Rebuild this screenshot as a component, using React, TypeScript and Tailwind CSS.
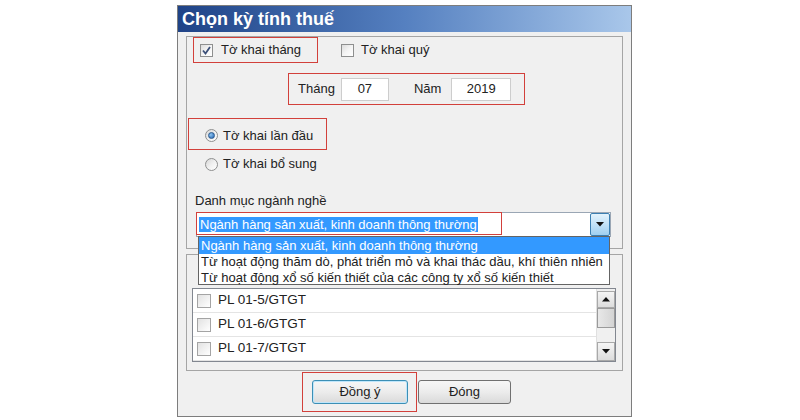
import React from "react";

function Check({ checked }: { checked?: boolean }) {
  return (
    <div className="w-[13px] h-[13px] shrink-0 border border-[#8e8f8f] bg-gradient-to-br from-[#dcdcdc] via-[#f4f4f4] to-white flex items-center justify-center">
      {checked && (
        <svg width="11" height="11" viewBox="0 0 11 11">
          <path d="M2 5.5 L4.5 8.5 L9 2" fill="none" stroke="#3b4f78" strokeWidth="1.8" />
        </svg>
      )}
    </div>
  );
}

function Radio({ checked }: { checked?: boolean }) {
  return (
    <div className="w-[13px] h-[13px] shrink-0 rounded-full border border-[#8e8f8f] bg-gradient-to-br from-[#d6d6d6] via-[#f0f0f0] to-white flex items-center justify-center">
      {checked && (
        <div className="w-[7px] h-[7px] rounded-full bg-[radial-gradient(circle_at_35%_35%,#8fc6f2,#1f5fae)] border border-[#2b5a8f]" />
      )}
    </div>
  );
}

function ListCheck() {
  return <div className="w-[14px] h-[14px] shrink-0 border border-[#a4a4a4] bg-gradient-to-br from-[#e2e2e2] to-white" />;
}

export default function App() {
  return (
    <div className="w-[800px] h-[420px] bg-white overflow-hidden font-['Liberation_Sans',Arial,sans-serif] text-[13px] text-[#222]">
      <div className="ml-[177px] mt-[5px] w-[455px] h-[412px] border border-[#7d7d7d] bg-[#f0f0f0] flex flex-col">
        <div className="h-[26px] shrink-0 bg-gradient-to-r from-[#1f4387] via-[#5580c0] to-[#a9c7ea] flex items-center pl-[4px] text-white font-bold text-[18px]">
          Chọn kỳ tính thuế
        </div>
        <div className="pl-[8px] flex flex-col">
          {/* Group 1 */}
          <div className="mt-[4px] w-[437px] h-[213px] border border-[#a5a5a5] flex flex-col">
            <div className="flex items-center h-[26px]">
              <div className="ml-[6px] w-[125px] h-[26px] border border-[#d2403b] flex items-center pl-[6px]">
                <Check checked />
                <span className="ml-[8px]">Tờ khai tháng</span>
              </div>
              <div className="ml-[23px] flex items-center">
                <Check />
                <span className="ml-[7px]">Tờ khai quý</span>
              </div>
            </div>
            <div className="mt-[10px] ml-[101px] w-[237px] h-[32px] border border-[#d2403b] flex items-center pl-[9px]">
              <span>Tháng</span>
              <div className="ml-[6px] w-[48px] h-[23px] bg-white border border-[#cdcdcd] flex items-center justify-center">07</div>
              <span className="ml-[25px]">Năm</span>
              <div className="ml-[10px] w-[60px] h-[23px] bg-white border border-[#cdcdcd] flex items-center justify-center">2019</div>
            </div>
            <div className="mt-[13px] ml-[1px] w-[139px] h-[32px] border border-[#d2403b] flex items-center pl-[16px] pt-[3px]">
              <Radio checked />
              <span className="ml-[5px]">Tờ khai lần đầu</span>
            </div>
            <div className="mt-[6px] ml-[18px] h-[16px] flex items-center">
              <Radio />
              <span className="ml-[5px]">Tờ khai bổ sung</span>
            </div>
            <div className="mt-[21px] ml-[8px] h-[16px] flex items-center">Danh mục ngành nghề</div>
            <div className="mt-[3px] ml-[9px] w-[415px] h-[25px] relative bg-white border border-[#9aa6b4] flex items-center">
              <div className="flex-1 flex items-center pl-[2px]">
                <span className="bg-[#3399ff] text-white px-[1px] leading-[15px]">Ngành hàng sản xuất, kinh doanh thông thường</span>
              </div>
              <div className="w-[20px] h-[23px] border border-[#3c7fb1] rounded-[2px] bg-gradient-to-b from-[#e3f2fc] via-[#c2e2f7] to-[#9fcff0] flex items-center justify-center">
                <svg width="8" height="5" viewBox="0 0 8 5">
                  <path d="M0 0 H8 L4 4.5 Z" fill="#111" />
                </svg>
              </div>
              <div className="absolute left-[-1px] top-[-1px] w-[306px] h-[23px] border border-[#d2403b]" />
              <div className="absolute left-[1px] right-[0px] top-full z-10 h-[49px] bg-white border border-[#646464] flex flex-col">
                <div className="h-[17px] bg-[#3399ff] text-white flex items-center pl-[2px]">Ngành hàng sản xuất, kinh doanh thông thường</div>
                <div className="h-[16px] flex items-center pl-[2px]">Từ hoạt động thăm dò, phát triển mỏ và khai thác dầu, khí thiên nhiên</div>
                <div className="h-[16px] flex items-center pl-[2px]">Từ hoạt động xổ số kiến thiết của các công ty xổ số kiến thiết</div>
              </div>
            </div>
          </div>
          {/* Group 2 */}
          <div className="mt-[5px] w-[437px] h-[117px] border border-[#a5a5a5] flex flex-col">
            <div className="mt-[33px] ml-[5px] w-[424px] h-[74px] bg-white border border-[#828790] flex">
              <div className="flex-1 flex flex-col text-[13.5px]">
                {["PL 01-5/GTGT", "PL 01-6/GTGT", "PL 01-7/GTGT"].map((t) => (
                  <div key={t} className="h-[24px] border-b border-[#e4e4e4] flex items-center pl-[4px]">
                    <ListCheck />
                    <span className="ml-[7px]">{t}</span>
                  </div>
                ))}
              </div>
              <div className="w-[19px] flex flex-col bg-[#f0f0f0] border-l border-[#e0e0e0]">
                <div className="h-[17px] mt-[2px] border border-[#a9a9a9] bg-gradient-to-b from-[#f5f5f5] to-[#dcdcdc] flex items-center justify-center">
                  <svg width="8" height="5" viewBox="0 0 8 5"><path d="M0 4.5 H8 L4 0 Z" fill="#111" /></svg>
                </div>
                <div className="h-[20px] border border-[#9a9a9a] bg-gradient-to-r from-[#e8e8e8] to-[#d4d4d4]" />
                <div className="flex-1" />
                <div className="h-[19px] border border-[#a9a9a9] bg-gradient-to-b from-[#f5f5f5] to-[#dcdcdc] flex items-center justify-center">
                  <svg width="8" height="5" viewBox="0 0 8 5"><path d="M0 0 H8 L4 4.5 Z" fill="#111" /></svg>
                </div>
              </div>
            </div>
          </div>
          {/* Buttons */}
          <div className="mt-[1px] flex items-start">
            <div className="ml-[116px] w-[115px] h-[40px] border border-[#d2403b] pl-[9px] pt-[7px]">
              <div className="w-[96px] h-[24px] rounded-[3px] border border-[#3c8fb5] shadow-[inset_0_0_0_1px_#bfe6fb] bg-gradient-to-b from-[#f6f6f6] via-[#ececec] to-[#dadada] flex items-center justify-center">
                <span>
                  Đồn<span className="underline">g</span> ý
                </span>
              </div>
            </div>
            <div className="ml-[1px] mt-[8px] w-[93px] h-[24px] rounded-[3px] border border-[#707070] bg-gradient-to-b from-[#f6f6f6] via-[#ececec] to-[#dadada] flex items-center justify-center">
              <span>
                Đón<span className="underline">g</span>
              </span>
            </div>
          </div>
        </div>
      </div>
    </div>
  );
}
